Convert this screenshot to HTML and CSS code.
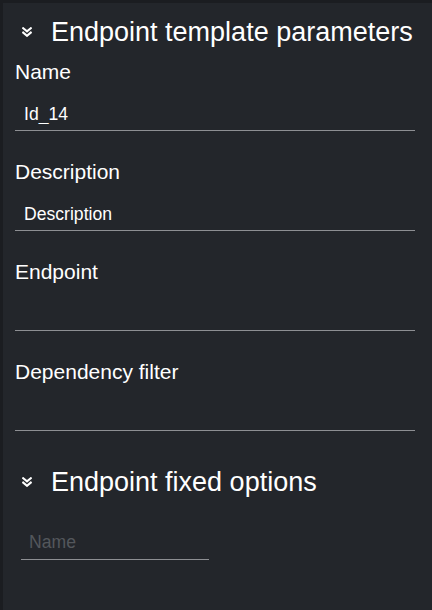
FILE: index.html
```html
<!DOCTYPE html>
<html lang="en">
<head>
<meta charset="utf-8">
<title>Endpoint template parameters</title>
<link rel="stylesheet" href="styles.css">
</head>
<body>
<div class="panel">
  <section class="section">
    <h2 class="section-title">
      <svg class="chevron" viewBox="0 0 10 10" aria-hidden="true"><path d="M1.2 1.2 L5 4.4 L8.8 1.2 M1.2 5.6 L5 8.8 L8.8 5.6"/></svg>
      <span>Endpoint template parameters</span>
    </h2>
    <div class="field">
      <label class="field-label">Name</label>
      <input class="field-input" type="text" value="Id_14">
    </div>
    <div class="field">
      <label class="field-label">Description</label>
      <input class="field-input" type="text" value="Description">
    </div>
    <div class="field">
      <label class="field-label">Endpoint</label>
      <input class="field-input" type="text" value="">
    </div>
    <div class="field field-last">
      <label class="field-label">Dependency filter</label>
      <input class="field-input" type="text" value="">
    </div>
  </section>
  <section class="section">
    <h2 class="section-title">
      <svg class="chevron" viewBox="0 0 10 10" aria-hidden="true"><path d="M1.2 1.2 L5 4.4 L8.8 1.2 M1.2 5.6 L5 8.8 L8.8 5.6"/></svg>
      <span>Endpoint fixed options</span>
    </h2>
    <input class="option-input" type="text" placeholder="Name">
  </section>
</div>
</body>
</html>
```
FILE: styles.css
```css
html, body {
  margin: 0;
  padding: 0;
}

body {
  background: #23262b;
  border-top: 3px solid #1b1d21;
  border-left: 3px solid #1b1d21;
  min-height: 607px;
  font-family: "Liberation Sans", Arial, sans-serif;
  color: #ffffff;
}

.panel {
  padding: 13px 17px 0 12px;
}

.section-title {
  display: flex;
  align-items: center;
  height: 32px;
  margin: 0;
  padding-left: 7px;
  font-size: 27px;
  line-height: 32px;
  font-weight: normal;
  color: #ffffff;
}

.chevron {
  width: 10px;
  height: 10px;
  margin-right: 19px;
  flex: none;
}

.chevron path {
  fill: none;
  stroke: #ffffff;
  stroke-width: 2.1;
  stroke-linecap: square;
  stroke-linejoin: miter;
}

.section:first-child .section-title {
  margin-bottom: 12px;
}

.field {
  display: flex;
  flex-direction: column;
  margin-bottom: 29px;
}

.field-last {
  margin-bottom: 35px;
}

.field-label {
  font-size: 21px;
  line-height: 24px;
  margin-bottom: 20px;
  color: #ffffff;
}

.field-input,
.option-input {
  display: block;
  box-sizing: content-box;
  height: 20px;
  margin: 0;
  border: 0;
  border-bottom: 1px solid #8d8f93;
  background: transparent;
  color: #ffffff;
  font-family: "Liberation Sans", Arial, sans-serif;
  font-size: 17.6px;
  line-height: 20px;
  outline: none;
}

.field-input {
  padding: 0 0 6px 9px;
}

.section:last-child .section-title {
  margin-bottom: 34px;
}

.option-input {
  width: 180px;
  margin-left: 6px;
  padding: 0 0 7px 8px;
}

.option-input::placeholder {
  color: #53575c;
  opacity: 1;
}
```
